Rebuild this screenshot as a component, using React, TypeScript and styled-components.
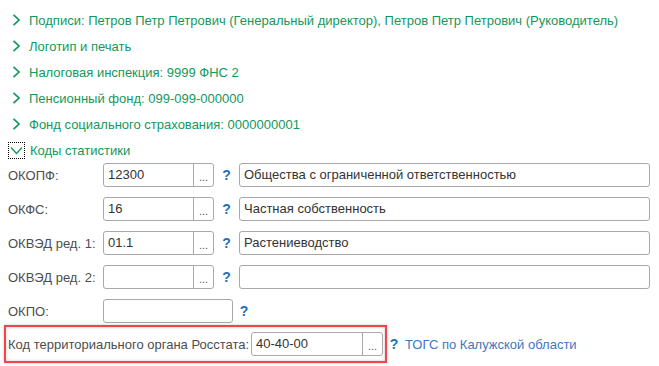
import styled, { createGlobalStyle } from 'styled-components'

const Global = createGlobalStyle`
  html, body { margin: 0; padding: 0; background: #ffffff; }
  body { font-family: "Liberation Sans", Arial, sans-serif; font-size: 13px; color: #4d4d4d; }
`

const Page = styled.div`
  width: 659px;
  height: 366px;
  padding-top: 7px;
  box-sizing: border-box;
  overflow: hidden;
`

const GroupRow = styled.div`
  display: flex;
  align-items: center;
  height: 26px;
  padding-left: 12px;
  color: #13985b;
  white-space: nowrap;
`

const Chevron = styled.svg`
  width: 9px;
  height: 12px;
  margin-right: 8px;
  flex: none;
`

const Expander = styled.div`
  width: 15px;
  height: 15px;
  margin-left: -4px;
  margin-right: 5px;
  border: 1px dotted #000;
  display: flex;
  align-items: center;
  justify-content: center;
  flex: none;
`

const FormRow = styled.div<{ $gap?: number }>`
  display: flex;
  align-items: center;
  height: 24px;
  margin-bottom: ${p => p.$gap ?? 10}px;
  padding-left: 8px;
  & > label {
    width: 95px;
    flex: none;
    white-space: nowrap;
  }
`

const Field = styled.div<{ $width: number }>`
  display: flex;
  width: ${p => p.$width}px;
  height: 24px;
  box-sizing: border-box;
  border: 1px solid #a9a9a9;
  border-radius: 3px;
  background: #fff;
  flex: none;
`

const Value = styled.div`
  flex: 1;
  padding-left: 4px;
  line-height: 22px;
  color: #333;
  white-space: nowrap;
  overflow: hidden;
`

const Dots = styled.div`
  width: 19px;
  border-left: 1px solid #a9a9a9;
  text-align: center;
  line-height: 26px;
  font-size: 11px;
  color: #555;
`

const Help = styled.span<{ $width?: number }>`
  color: #1c6fb8;
  font-weight: bold;
  font-size: 14px;
  width: ${p => p.$width ?? 25}px;
  text-align: center;
  flex: none;
`

const Link = styled.span`
  color: #3c78c0;
  margin-left: 4px;
  white-space: nowrap;
`

const Highlight = styled.div`
  margin-left: 4px;
  width: 383px;
  height: 38px;
  box-sizing: border-box;
  border: 2px solid #f0454b;
  box-shadow: inset 0 0 3px rgba(0, 0, 0, 0.25), 0 0 3px rgba(0, 0, 0, 0.2);
  display: flex;
  align-items: center;
  padding-left: 2px;
  & > label { width: 243px; flex: none; white-space: nowrap; }
`

const Outer = styled.div`
  display: flex;
  align-items: center;
`

const groups = [
  'Подписи: Петров Петр Петрович (Генеральный директор), Петров Петр Петрович (Руководитель)',
  'Логотип и печать',
  'Налоговая инспекция: 9999 ФНС 2',
  'Пенсионный фонд: 099-099-000000',
  'Фонд социального страхования: 0000000001',
]

const codes = [
  { label: 'ОКОПФ:', value: '12300', desc: 'Общества с ограниченной ответственностью' },
  { label: 'ОКФС:', value: '16', desc: 'Частная собственность' },
  { label: 'ОКВЭД ред. 1:', value: '01.1', desc: 'Растениеводство' },
  { label: 'ОКВЭД ред. 2:', value: '', desc: '' },
]

const App = () => (
  <>
    <Global />
    <Page>
      {groups.map(g => (
        <GroupRow key={g}>
          <Chevron viewBox="0 0 9 12">
            <polyline points="1.5,0.8 7,6 1.5,11.2" fill="none" stroke="#13985b" strokeWidth="1.7" />
          </Chevron>
          {g}
        </GroupRow>
      ))}
      <GroupRow>
        <Expander>
          <svg width="13" height="9" viewBox="0 0 13 9">
            <polyline points="1,1.5 6.5,7.5 12,1.5" fill="none" stroke="#13985b" strokeWidth="1.4" />
          </svg>
        </Expander>
        Коды статистики
      </GroupRow>
      {codes.map(c => (
        <FormRow key={c.label}>
          <label>{c.label}</label>
          <Field $width={111}>
            <Value>{c.value}</Value>
            <Dots>...</Dots>
          </Field>
          <Help>?</Help>
          <Field $width={411}>
            <Value>{c.desc}</Value>
          </Field>
        </FormRow>
      ))}
      <FormRow $gap={2}>
        <label>ОКПО:</label>
        <Field $width={130}>
          <Value />
        </Field>
        <Help $width={22}>?</Help>
      </FormRow>
      <Outer>
        <Highlight>
          <label>Код территориального органа Росстата:</label>
          <Field $width={132}>
            <Value>40-40-00</Value>
            <Dots>...</Dots>
          </Field>
        </Highlight>
        <Help $width={14}>?</Help>
        <Link>ТОГС по Калужской области</Link>
      </Outer>
    </Page>
  </>
)

export default App
